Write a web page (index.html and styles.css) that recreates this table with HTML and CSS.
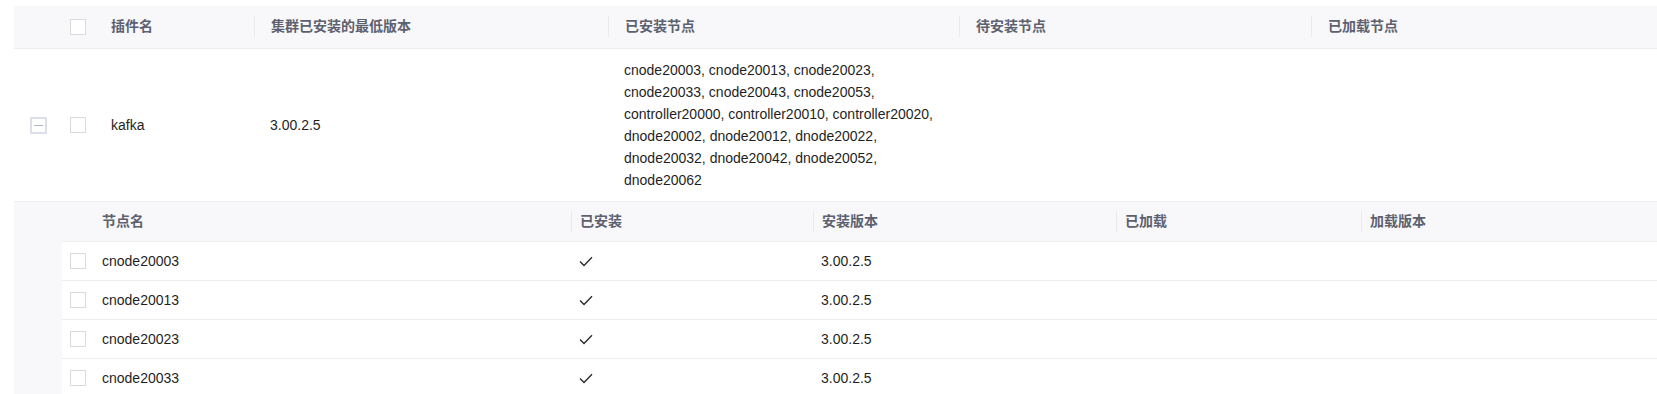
FILE: index.html
```html
<!DOCTYPE html>
<html lang="zh-CN">
<head>
<meta charset="utf-8">
<title>插件</title>
<link rel="stylesheet" href="styles.css">
</head>
<body>
<div class="page">
  <div class="table">
    <div class="row main-grid head">
      <div class="cell c-exp"></div>
      <div class="cell c-chk"><span class="checkbox"></span></div>
      <div class="cell"><span class="th first">插件名</span></div>
      <div class="cell"><span class="th sep">集群已安装的最低版本</span></div>
      <div class="cell"><span class="th sep">已安装节点</span></div>
      <div class="cell"><span class="th sep">待安装节点</span></div>
      <div class="cell"><span class="th sep">已加载节点</span></div>
    </div>
    <div class="row main-grid body-row">
      <div class="cell c-exp"><span class="expander"><span class="minus"></span></span></div>
      <div class="cell c-chk"><span class="checkbox"></span></div>
      <div class="cell td">kafka</div>
      <div class="cell td">3.00.2.5</div>
      <div class="cell td nodes">cnode20003, cnode20013, cnode20023, cnode20033, cnode20043, cnode20053, controller20000, controller20010, controller20020, dnode20002, dnode20012, dnode20022, dnode20032, dnode20042, dnode20052, dnode20062</div>
      <div class="cell td"></div>
      <div class="cell td"></div>
    </div>
    <div class="sub">
      <div class="subtable">
        <div class="row sub-grid sub-head">
          <div class="cell"></div>
          <div class="cell"><span class="sth">节点名</span></div>
          <div class="cell"><span class="sth sep">已安装</span></div>
          <div class="cell"><span class="sth sep">安装版本</span></div>
          <div class="cell"><span class="sth sep">已加载</span></div>
          <div class="cell"><span class="sth sep">加载版本</span></div>
        </div>
        <div class="row sub-grid sub-row">
          <div class="cell s-chk"><span class="checkbox"></span></div>
          <div class="cell s-pad">cnode20003</div>
          <div class="cell s-pad"><svg class="tick" width="14" height="11" viewBox="0 0 14 11"><polyline points="1,5.5 5,9.5 13,1.2" fill="none" stroke="#262626" stroke-width="1.3"/></svg></div>
          <div class="cell s-pad">3.00.2.5</div>
          <div class="cell s-pad"></div>
          <div class="cell s-pad"></div>
        </div>
        <div class="row sub-grid sub-row">
          <div class="cell s-chk"><span class="checkbox"></span></div>
          <div class="cell s-pad">cnode20013</div>
          <div class="cell s-pad"><svg class="tick" width="14" height="11" viewBox="0 0 14 11"><polyline points="1,5.5 5,9.5 13,1.2" fill="none" stroke="#262626" stroke-width="1.3"/></svg></div>
          <div class="cell s-pad">3.00.2.5</div>
          <div class="cell s-pad"></div>
          <div class="cell s-pad"></div>
        </div>
        <div class="row sub-grid sub-row">
          <div class="cell s-chk"><span class="checkbox"></span></div>
          <div class="cell s-pad">cnode20023</div>
          <div class="cell s-pad"><svg class="tick" width="14" height="11" viewBox="0 0 14 11"><polyline points="1,5.5 5,9.5 13,1.2" fill="none" stroke="#262626" stroke-width="1.3"/></svg></div>
          <div class="cell s-pad">3.00.2.5</div>
          <div class="cell s-pad"></div>
          <div class="cell s-pad"></div>
        </div>
        <div class="row sub-grid sub-row">
          <div class="cell s-chk"><span class="checkbox"></span></div>
          <div class="cell s-pad">cnode20033</div>
          <div class="cell s-pad"><svg class="tick" width="14" height="11" viewBox="0 0 14 11"><polyline points="1,5.5 5,9.5 13,1.2" fill="none" stroke="#262626" stroke-width="1.3"/></svg></div>
          <div class="cell s-pad">3.00.2.5</div>
          <div class="cell s-pad"></div>
          <div class="cell s-pad"></div>
        </div>
      </div>
    </div>
  </div>
</div>
</body>
</html>
```

FILE: styles.css
```css
html, body {
  margin: 0;
  padding: 0;
  background: #ffffff;
  overflow: hidden;
}

body {
  font-family: "Liberation Sans", "Noto Sans CJK SC", sans-serif;
  font-size: 14px;
  color: #1f1f1f;
}

.page {
  padding: 6px 0 0 14px;
}

.table {
  width: 1643px;
}

.row {
  display: grid;
  box-sizing: border-box;
}

.main-grid {
  grid-template-columns: 48px 33px 159px 354px 351px 352px 1fr;
}

.cell {
  box-sizing: border-box;
  min-width: 0;
}

/* main header */
.head {
  background: #f8f8fa;
  border-bottom: 1px solid #ebedf0;
  align-items: center;
}

.head .cell {
  padding: 10px 0 11px;
}

.th {
  display: block;
  line-height: 21px;
  height: 21px;
  padding-left: 16px;
  font-weight: 700;
  color: #5d616f;
}

.sep {
  border-left: 1px solid #e9eaee;
}

.c-exp {
  padding-left: 16px !important;
  display: flex;
  align-items: center;
}

.c-chk {
  padding-left: 8px !important;
  display: flex;
  align-items: center;
}

.checkbox {
  display: block;
  width: 16px;
  height: 16px;
  box-sizing: border-box;
  border: 1px solid #dadada;
  background: #ffffff;
}

.expander {
  display: flex;
  align-items: center;
  justify-content: center;
  width: 17px;
  height: 17px;
  box-sizing: border-box;
  border: 2px solid #dcdfea;
  background: #ffffff;
}

.minus {
  display: block;
  width: 9px;
  height: 1px;
  background: #aeb3c8;
}

/* main body row */
.body-row {
  align-items: center;
  border-bottom: 1px solid #ebedf0;
}

.td {
  padding-left: 16px;
  padding-right: 16px;
  line-height: 22px;
}

.nodes {
  padding-top: 10px;
  padding-bottom: 10px;
}

/* sub table */
.sub {
  background: #f8f8fa;
  padding-left: 48px;
}

.sub-grid {
  grid-template-columns: 32px 477px 242px 303px 245px 1fr;
}

.sub-head {
  background: #f8f8fa;
  border-bottom: 1px solid #ebedf0;
}

.sub-head .cell {
  padding: 9px 0;
}

.sth {
  display: block;
  height: 21px;
  line-height: 21px;
  padding-left: 8px;
  font-weight: 700;
  color: #5d616f;
}

.sub-row {
  background: #ffffff;
  height: 39px;
  border-bottom: 1px solid #ebedf0;
  align-items: center;
  line-height: 22px;
}

.s-chk {
  padding-left: 8px;
  display: flex;
  align-items: center;
}

.s-pad {
  padding-left: 8px;
  display: flex;
  align-items: center;
}

.tick {
  display: block;
}
```
